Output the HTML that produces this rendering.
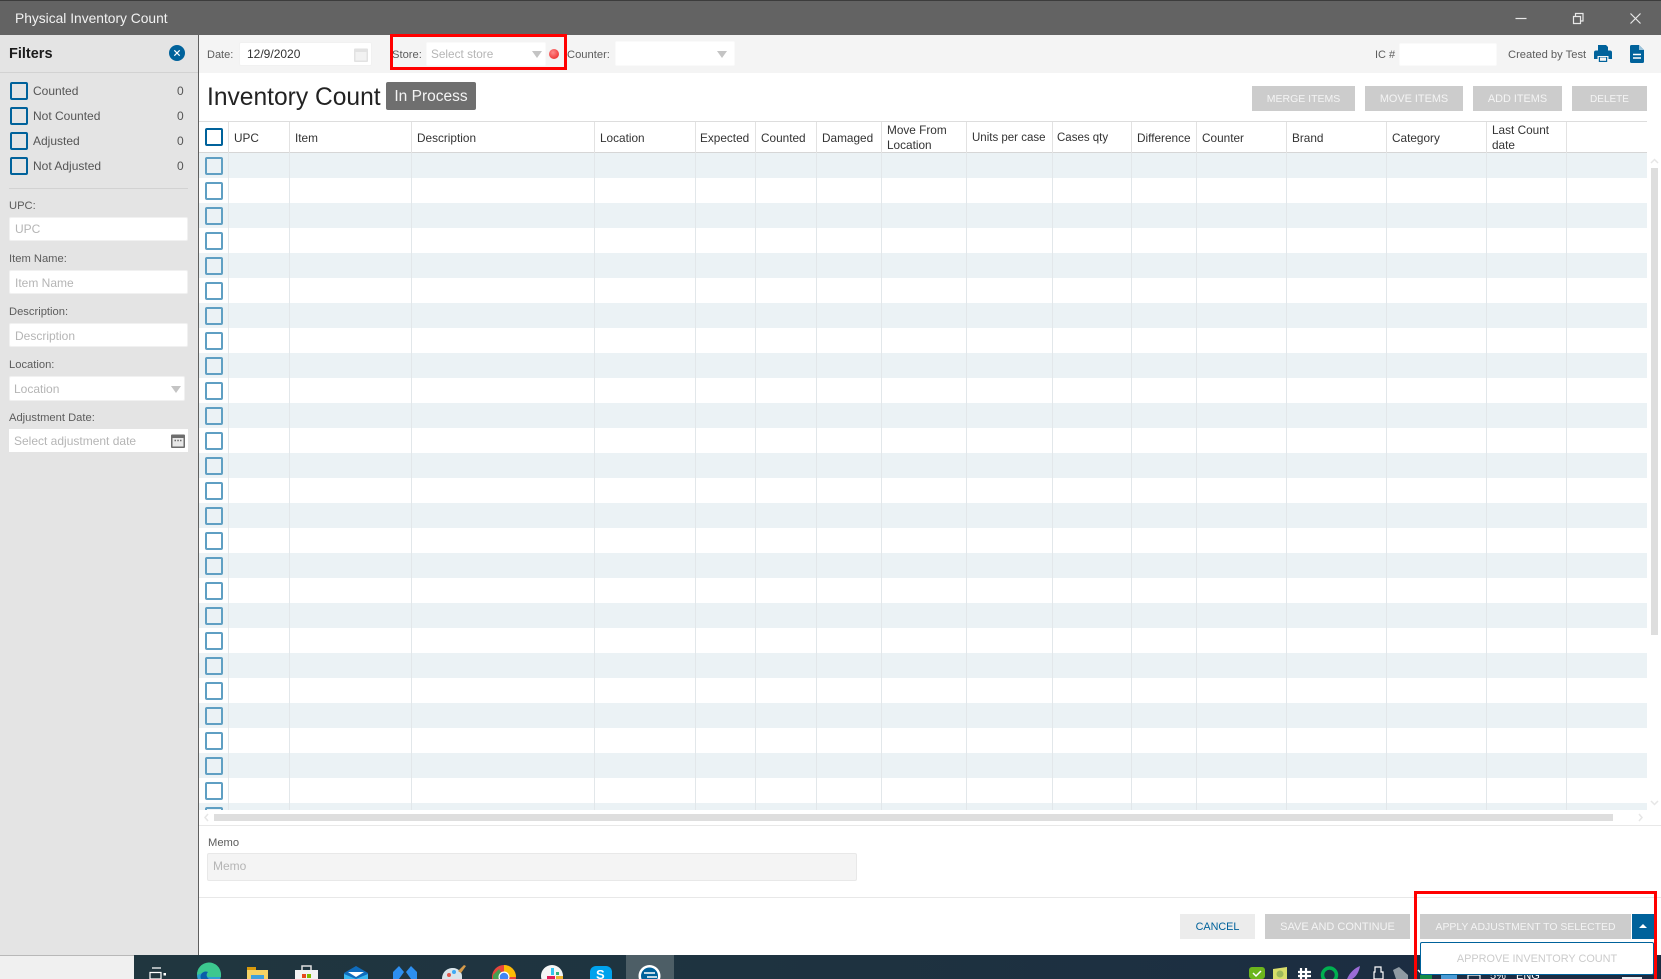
<!DOCTYPE html>
<html><head><meta charset="utf-8"><title>Physical Inventory Count</title>
<style>
html,body{margin:0;padding:0;background:#fff}
body{position:relative;width:1661px;height:979px;overflow:hidden;font-family:"Liberation Sans",sans-serif;font-size:12px;color:#555}
div,span{position:absolute;box-sizing:border-box}
.t{white-space:nowrap;line-height:16px;height:16px}
.cb{width:18px;height:18px;border:2px solid #00629b;border-radius:2px;background:transparent}
.rb{left:205px;width:18px;height:18px;border:2px solid #5f9fc3;border-radius:2px}
.inp{background:#fff;border:1px solid #f1f1f1;border-radius:2px}
.ph{color:#b5b5b5}
.lb{font-size:11.200px;color:#5c5c5c}
.h{color:#333;top:130px;font-size:11.800px}
.h2{color:#333;line-height:15px;height:30px;top:122.500px;white-space:nowrap;font-size:11.800px}
.v{width:1px;top:153px;height:657px;background:#e2e7ea}
.vh{width:1px;top:122px;height:31px;background:#e2e2e2}
.btn{background:#ccc;color:#f4f4f4;text-align:center;line-height:27px;height:25px;white-space:nowrap}
.arr{width:0;height:0;border-left:5.500px solid transparent;border-right:5.500px solid transparent;border-top:7px solid #c4c4c4}
</style></head><body>

<div style="left:0;top:0;width:1661px;height:35px;background:#636363;border-top:1px solid #3c3c3c"></div>
<div class="t" style="left:15px;top:11px;color:#f2f2f2;font-size:13.800px">Physical Inventory Count</div>
<svg style="position:absolute;left:0;top:0" width="1661" height="35" fill="none" stroke="#e8e8e8">
<path d="M1515.500 18.500h11" stroke-width="1.200"/>
<path d="M1573.500 16.500h7v7h-7zM1575.500 16v-2.500h7.500v7.500h-2.500" stroke-width="1.200"/>
<path d="M1630.500 13.500l10 10M1640.500 13.500l-10 10" stroke-width="1.200"/>
</svg>

<!-- Sidebar -->
<div style="left:0;top:35px;width:199px;height:920px;background:#e4e4e4;border-right:1px solid #5f5f5f"></div>
<div style="left:0;top:72px;width:198px;height:1px;background:#d2d2d2"></div>
<div class="t" style="left:9px;top:46px;font-size:14.500px;font-weight:bold;color:#1b1b1b">Filters</div>
<svg style="position:absolute;left:169px;top:45px" width="16" height="16"><circle cx="8" cy="8" r="8" fill="#00629b"/><path d="M5.300 5.300l5.400 5.400M10.700 5.300l-5.400 5.400" stroke="#fff" stroke-width="1.200"/></svg>

<div class="cb" style="left:10px;top:82px"></div><div class="t" style="left:33px;top:83px">Counted</div><div class="t" style="left:177px;top:83px">0</div>
<div class="cb" style="left:10px;top:107px"></div><div class="t" style="left:33px;top:108px">Not Counted</div><div class="t" style="left:177px;top:108px">0</div>
<div class="cb" style="left:10px;top:132px"></div><div class="t" style="left:33px;top:133px">Adjusted</div><div class="t" style="left:177px;top:133px">0</div>
<div class="cb" style="left:10px;top:157px"></div><div class="t" style="left:33px;top:158px">Not Adjusted</div><div class="t" style="left:177px;top:158px">0</div>
<div style="left:9px;top:188px;width:179px;height:1px;background:#d2d2d2"></div>

<div class="t lb" style="left:9px;top:198px">UPC:</div>
<div class="inp" style="left:9px;top:217px;width:179px;height:24px"></div><div class="t ph" style="left:15px;top:221px">UPC</div>
<div class="t lb" style="left:9px;top:251px">Item Name:</div>
<div class="inp" style="left:9px;top:270px;width:179px;height:24px"></div><div class="t ph" style="left:15px;top:275px">Item Name</div>
<div class="t lb" style="left:9px;top:304px">Description:</div>
<div class="inp" style="left:9px;top:323px;width:179px;height:24px"></div><div class="t ph" style="left:15px;top:328px">Description</div>
<div class="t lb" style="left:9px;top:357px">Location:</div>
<div class="inp" style="left:9px;top:376px;width:176px;height:25px"></div><div class="t ph" style="left:14px;top:381px">Location</div>
<div class="arr" style="left:171px;top:386px"></div>
<div class="t lb" style="left:9px;top:410px">Adjustment Date:</div>
<div style="left:9px;top:429px;width:179px;height:23px;background:#fff"></div><div class="t ph" style="left:14px;top:433px">Select adjustment date</div>
<svg style="position:absolute;left:171px;top:432px" width="14" height="17"><path d="M0 3.500a1 1 0 0 1 1-1h12a1 1 0 0 1 1 1V15a1 1 0 0 1-1 1H1a1 1 0 0 1-1-1z" fill="#6d6d6d"/><rect x="1.500" y="6" width="11" height="8.500" fill="#e8e8e8"/><path d="M3.500 8.500h1.500M6.300 8.500h1.500M9 8.500h1.500" stroke="#6d6d6d" stroke-width="1.500"/></svg>

<!-- Toolbar -->
<div style="left:199px;top:35px;width:1462px;height:38px;background:#f4f4f4"></div>
<div class="t lb" style="left:207px;top:47px;font-size:11px">Date:</div>
<div class="inp" style="left:239px;top:42px;width:133px;height:24px"></div>
<div class="t" style="left:247px;top:46px;color:#333">12/9/2020</div>
<svg style="position:absolute;left:354px;top:46px" width="14" height="17"><path d="M0 3.500a1 1 0 0 1 1-1h12a1 1 0 0 1 1 1V15a1 1 0 0 1-1 1H1a1 1 0 0 1-1-1z" fill="#e2e2e2"/><rect x="1.500" y="6" width="11" height="8.500" fill="#f2f2f2"/></svg>
<div class="t lb" style="left:392px;top:47px">Store:</div>
<div class="inp" style="left:426px;top:42px;width:120px;height:24px;border-color:#fafafa"></div>
<div class="t ph" style="left:431px;top:46px;font-size:11.800px">Select store</div>
<div class="arr" style="left:532px;top:51px"></div>
<div style="left:549px;top:49px;width:10px;height:10px;border-radius:50%;background:radial-gradient(circle at 40% 35%,#ff8a8a,#f03b3b 70%)"></div>
<div class="t lb" style="left:567px;top:47px">Counter:</div>
<div class="inp" style="left:615px;top:41px;width:120px;height:25px;border-color:#fafafa"></div>
<div class="arr" style="left:717px;top:51px"></div>
<div class="t lb" style="left:1375px;top:47px;font-size:11px">IC #</div>
<div class="inp" style="left:1399px;top:43px;width:98px;height:23px;border-color:#fafafa"></div>
<div class="t lb" style="left:1508px;top:47px">Created by Test</div>
<svg style="position:absolute;left:1594px;top:45px" width="18" height="18"><path d="M4 0h8l2 2v4H4zM2 5.500h14a2 2 0 0 1 2 2V14h-3.500v-3h-11v3H0V7.500a2 2 0 0 1 2-2z" fill="#00629b"/><rect x="4.800" y="12" width="8.400" height="5" fill="#00629b"/><rect x="6" y="12.500" width="6" height="3.300" fill="#f4f4f4"/></svg>
<svg style="position:absolute;left:1630px;top:45px" width="14" height="18"><path d="M1.500 0H9l5 5v11.500a1.500 1.500 0 0 1-1.500 1.500h-11A1.500 1.500 0 0 1 0 16.500v-15A1.500 1.500 0 0 1 1.500 0z" fill="#00629b"/><path d="M9 0l5 5H9z" fill="#9cc4dc"/><path d="M3 9.500h8M3 13h8" stroke="#fff" stroke-width="1.600"/></svg>

<!-- Heading -->
<div class="t" style="left:207px;top:82px;height:32px;line-height:32px;font-size:24.600px;color:#222">Inventory Count</div>
<div style="left:386px;top:82px;width:90px;height:28px;background:#6f6f6f;border-radius:2px;color:#f4f4f4;font-size:15.500px;line-height:30px;text-align:center;white-space:nowrap">In Process</div>
<div class="btn" style="left:1252px;top:86px;width:103px;font-size:10.500px">MERGE ITEMS</div>
<div class="btn" style="left:1365px;top:86px;width:98px;font-size:10.900px">MOVE ITEMS</div>
<div class="btn" style="left:1473px;top:86px;width:89px;font-size:10.900px">ADD ITEMS</div>
<div class="btn" style="left:1572px;top:86px;width:75px;font-size:10px">DELETE</div>

<!-- Table -->
<div style="left:199px;top:121px;width:1448px;height:1px;background:#ddd"></div>
<div style="left:199px;top:152px;width:1448px;height:1px;background:#d6d6d6"></div>
<div style="left:199px;top:153px;width:1448px;height:657px;background:repeating-linear-gradient(to bottom,#ebf2f5 0,#ebf2f5 25px,#fff 25px,#fff 50px)"></div>

<div class="v" style="left:228px"></div><div class="v" style="left:289px"></div><div class="v" style="left:411px"></div><div class="v" style="left:594px"></div><div class="v" style="left:695px"></div><div class="v" style="left:755px"></div><div class="v" style="left:816px"></div><div class="v" style="left:881px"></div><div class="v" style="left:966px"></div><div class="v" style="left:1052px"></div><div class="v" style="left:1131px"></div><div class="v" style="left:1196px"></div><div class="v" style="left:1286px"></div><div class="v" style="left:1386px"></div><div class="v" style="left:1486px"></div><div class="v" style="left:1566px"></div>
<div class="vh" style="left:228px"></div><div class="vh" style="left:289px"></div><div class="vh" style="left:411px"></div><div class="vh" style="left:594px"></div><div class="vh" style="left:695px"></div><div class="vh" style="left:755px"></div><div class="vh" style="left:816px"></div><div class="vh" style="left:881px"></div><div class="vh" style="left:966px"></div><div class="vh" style="left:1052px"></div><div class="vh" style="left:1131px"></div><div class="vh" style="left:1196px"></div><div class="vh" style="left:1286px"></div><div class="vh" style="left:1386px"></div><div class="vh" style="left:1486px"></div><div class="vh" style="left:1566px"></div>

<div class="cb" style="left:205px;top:128px"></div>
<div class="t h" style="left:234px">UPC</div>
<div class="t h" style="left:295px">Item</div>
<div class="t h" style="left:417px">Description</div>
<div class="t h" style="left:600px">Location</div>
<div class="t h" style="left:700px">Expected</div>
<div class="t h" style="left:761px">Counted</div>
<div class="t h" style="left:822px">Damaged</div>
<div class="h2" style="left:887px">Move From<br>Location</div>
<div class="t h" style="left:972px;font-size:11.500px">Units per case</div>
<div class="t h" style="left:1057px;font-size:11.500px">Cases qty</div>
<div class="t h" style="left:1137px">Difference</div>
<div class="t h" style="left:1202px">Counter</div>
<div class="t h" style="left:1292px">Brand</div>
<div class="t h" style="left:1392px">Category</div>
<div class="h2" style="left:1492px">Last Count<br>date</div>

<div style="left:199px;top:153px;width:40px;height:657px;overflow:hidden">
<div class="rb" style="left:6px;top:4px"></div><div class="rb" style="left:6px;top:29px"></div><div class="rb" style="left:6px;top:54px"></div><div class="rb" style="left:6px;top:79px"></div><div class="rb" style="left:6px;top:104px"></div><div class="rb" style="left:6px;top:129px"></div><div class="rb" style="left:6px;top:154px"></div><div class="rb" style="left:6px;top:179px"></div><div class="rb" style="left:6px;top:204px"></div><div class="rb" style="left:6px;top:229px"></div><div class="rb" style="left:6px;top:254px"></div><div class="rb" style="left:6px;top:279px"></div><div class="rb" style="left:6px;top:304px"></div><div class="rb" style="left:6px;top:329px"></div><div class="rb" style="left:6px;top:354px"></div><div class="rb" style="left:6px;top:379px"></div><div class="rb" style="left:6px;top:404px"></div><div class="rb" style="left:6px;top:429px"></div><div class="rb" style="left:6px;top:454px"></div><div class="rb" style="left:6px;top:479px"></div><div class="rb" style="left:6px;top:504px"></div><div class="rb" style="left:6px;top:529px"></div><div class="rb" style="left:6px;top:554px"></div><div class="rb" style="left:6px;top:579px"></div><div class="rb" style="left:6px;top:604px"></div><div class="rb" style="left:6px;top:629px"></div><div class="rb" style="left:6px;top:654px"></div>
</div>

<!-- Scrollbars -->
<div style="left:1651px;top:168px;width:7px;height:467px;background:#dedede"></div>
<div style="left:214px;top:814px;width:1399px;height:7px;background:#dedede"></div>
<svg style="position:absolute;left:0;top:0" width="1661" height="979" fill="none" stroke="#e6e6e6" stroke-width="1.500">
<path d="M1651 163l3.500-3.500 3.500 3.500M1651 801l3.500 3.500 3.500-3.500M208 814l-3 3.500 3 3.500M1639 814l3 3.500-3 3.500"/>
</svg>
<div style="left:199px;top:825px;width:1462px;height:1px;background:#e8e8e8"></div>

<!-- Memo -->
<div class="t lb" style="left:208px;top:835px">Memo</div>
<div style="left:207px;top:853px;width:650px;height:28px;background:#f4f4f4;border:1px solid #e8e8e8;border-radius:2px"></div>
<div class="t ph" style="left:213px;top:858px">Memo</div>
<div style="left:199px;top:897px;width:1462px;height:1px;background:#e8e8e8"></div>

<!-- Bottom buttons -->
<div class="btn" style="left:1180px;top:914px;width:75px;background:#ececec;color:#00629b;font-size:10.800px">CANCEL</div>
<div class="btn" style="left:1265px;top:914px;width:145px;font-size:11px">SAVE AND CONTINUE</div>
<div class="btn" style="left:1420px;top:914px;width:211px;font-size:10.450px">APPLY ADJUSTMENT TO SELECTED</div>
<div style="left:1632px;top:914px;width:22px;height:25px;background:#00629b"></div>
<div style="left:1639px;top:924px;width:0;height:0;border-left:4px solid transparent;border-right:4px solid transparent;border-bottom:4px solid #fff"></div>

<!-- Taskbar -->
<div style="left:0;top:955px;width:134px;height:24px;background:#f0f0f0;border-top:1px solid #b8b8b8"></div>
<div style="left:134px;top:955px;width:1527px;height:24px;background:linear-gradient(to right,#20363f,#1e3340 40%,#1b2b42)"></div>
<div style="left:626px;top:955px;width:48px;height:24px;background:#4d5e66"></div>
<svg style="position:absolute;left:0;top:955px" width="1661" height="24" viewBox="0 955 1661 24">
<path d="M150 972.500h11v6.500h-11zM152 968h9M152 979h9" fill="none" stroke="#fff" stroke-width="1.200"/><rect x="163.500" y="973" width="2.500" height="2.500" fill="#fff"/>
<circle cx="209" cy="975" r="12" fill="#2c9fd0"/><path d="M197 975a12 12 0 0 1 24-1l0 3h-12c-3 0-3-3-1-5-4 0-8 2-11 3z" fill="#3cc88f"/><path d="M201 979c-2-5 3-9 7-7-2 2-2 5 1 7z" fill="#0b5ea8"/>
<path d="M247 968a1 1 0 0 1 1-1h6l2 3h12v9h-21z" fill="#f6d365"/><rect x="247" y="967" width="9" height="3" fill="#d99a0c"/><rect x="251" y="975" width="13" height="4" fill="#3fa0dc"/>
<rect x="295" y="970" width="23" height="9" fill="#f3f3f3"/><path d="M302 970v-4h9v4" fill="none" stroke="#e0e0e0" stroke-width="1.500"/><rect x="302" y="974" width="4" height="4" fill="#e8491d"/><rect x="307" y="974" width="4" height="4" fill="#7fb900"/>
<path d="M344 973l12-7 12 7v6h-24z" fill="#0f6cbd"/><path d="M344 974l12 5 12-5v5h-24z" fill="#38b6f0"/><path d="M348 972h16l-8 5z" fill="#fff"/>
<path d="M393 979v-7l6-6 5 6-5 7zM417 979v-7l-6-6-5 6 5 7z" fill="#2d8ff0"/>
<path d="M442 979c0-7 5-11 11-11 5 0 9 4 9 8v3z" fill="#d9e4ea"/><path d="M458 971l6-6 2 1-5 7z" fill="#d59a4a"/><circle cx="449" cy="975" r="2" fill="#e2574c"/><circle cx="454" cy="972" r="2" fill="#3fa9f5"/>
<circle cx="504" cy="977" r="12" fill="#e8453c"/><path d="M504 977l-11 6 0-8 6-6z" fill="#34a853" opacity=".9"/><path d="M504 965a12 12 0 0 1 12 12h-12z" fill="#fbbc05"/><circle cx="504" cy="977" r="5.500" fill="#fff"/><circle cx="504" cy="977" r="4.300" fill="#4285f4"/>
<circle cx="552" cy="976" r="11" fill="#f5f5f5"/><rect x="551" y="968" width="3" height="7" fill="#36c5f0"/><rect x="556" y="972" width="3" height="3" fill="#2eb67d"/><rect x="547" y="976" width="8" height="3" fill="#e01e5a"/><rect x="556" y="976" width="7" height="3" fill="#ecb22e"/>
<path d="M596 966h10a6 6 0 0 1 6 6v7h-22v-7a6 6 0 0 1 6-6z" fill="#00a2ed"/><text x="596" y="979" fill="#fff" font-family="Liberation Sans,sans-serif" font-size="13" font-weight="bold">S</text>
<circle cx="649.500" cy="976" r="11" fill="#fff"/><circle cx="649.500" cy="976" r="8.500" fill="#00629b"/><path d="M644 973h11M647 977h10" stroke="#fff" stroke-width="1.500"/>
<rect x="1249" y="967" width="16" height="12" rx="3" fill="#6cb51c"/><path d="M1253 973l3 3 5-5" fill="none" stroke="#fff" stroke-width="1.500"/>
<path d="M1273 969l14-2v12h-14z" fill="#d8dd6a"/><circle cx="1280" cy="974" r="3.500" fill="#9fb85c"/>
<path d="M1301 968v11M1306 968v11M1298 972h13M1298 976h13" stroke="#fff" stroke-width="2.200"/>
<circle cx="1329.500" cy="975" r="7" fill="none" stroke="#00b050" stroke-width="3.500"/>
<path d="M1347 979c3-7 8-11 13-13-1 6-4 11-8 13z" fill="#9b6cd6"/>
<path d="M1375 967h6v5h2v7h-9v-7h1z" fill="none" stroke="#fff" stroke-width="1.200"/>
<path d="M1393 970l6-3 9 8v4h-12z" fill="#8f9aa3"/>
<path d="M1418 970l3 3 3-4" fill="none" stroke="#fff" stroke-width="1.500"/><rect x="1420" y="975" width="12" height="4" fill="#138a46"/>
<rect x="1441" y="975" width="16" height="4" fill="#4a9ad4"/>
<path d="M1468 974v5M1480 974v5M1468 975h12" stroke="#fff" stroke-width="1.200" fill="none"/>
<text x="1490" y="979" fill="#fff" font-family="Liberation Sans,sans-serif" font-size="11">5%</text>
<text x="1516" y="979" fill="#fff" font-family="Liberation Sans,sans-serif" font-size="11">ENG</text>
<path d="M1622 977h20v2h-20z" fill="#e8eef2"/>
</svg>

<!-- Dropdown -->
<div style="left:1420px;top:942px;width:234px;height:33px;background:#fff;border:1.500px solid #00629b;border-radius:2px;color:#cbcbcb;text-align:center;line-height:32px;font-size:10.900px;white-space:nowrap">APPROVE INVENTORY COUNT</div>

<!-- Red annotation boxes -->
<div style="left:390px;top:34px;width:177px;height:36px;border:3px solid #f00"></div>
<div style="left:1414px;top:891px;width:243px;height:88px;border:3px solid #f00;border-bottom:0"></div>

</body></html>
